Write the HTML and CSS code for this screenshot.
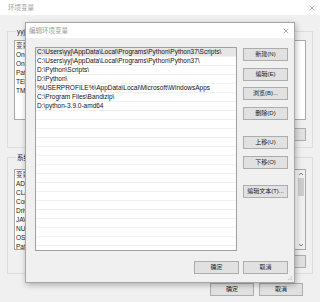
FILE: index.html
```html
<!DOCTYPE html>
<html lang="zh-CN">
<head>
    <meta charset="UTF-8">
    <title>环境变量</title>
    <link rel="stylesheet" href="styles.css">
</head>
<body>

    <!-- back window -->
    <div class="window">
        <div class="titlebar">
            <span class="title">环境变量</span>
            <svg class="close" viewBox="0 0 8 8"><path d="M1 1L7 7M7 1L1 7"/></svg>
        </div>

        <div class="content">
            <fieldset class="group group-user">
                <legend>yyj 的用户变量(U)</legend>
                <div class="listview lv-user">
                    <div class="lv-row lv-head"><span class="c1">变量</span></div>
                    <div class="lv-row"><span class="c1">OneDrive</span></div>
                    <div class="lv-row"><span class="c1">OneDriveConsumer</span></div>
                    <div class="lv-row"><span class="c1">Path</span></div>
                    <div class="lv-row"><span class="c1">TEMP</span></div>
                    <div class="lv-row"><span class="c1">TMP</span></div>
                </div>
                <div class="btnrow">
                    <button class="btn"></button>
                    <button class="btn"></button>
                    <button class="btn"></button>
                </div>
            </fieldset>

            <fieldset class="group group-sys">
                <legend>系统变量(S)</legend>
                <div class="listview lv-sys">
                    <div class="lv-rows">
                        <div class="lv-row lv-head"><span class="c1">变量</span></div>
                        <div class="lv-row"><span class="c1">ADSK_CLM</span></div>
                        <div class="lv-row"><span class="c1">CLASSPATH</span></div>
                        <div class="lv-row"><span class="c1">ComSpec</span></div>
                        <div class="lv-row"><span class="c1">DriverData</span></div>
                        <div class="lv-row"><span class="c1">JAVA_HOME</span></div>
                        <div class="lv-row"><span class="c1">NUMBER_OF_PROCESSORS</span></div>
                        <div class="lv-row"><span class="c1">OS</span></div>
                        <div class="lv-row"><span class="c1">Path</span></div>
                    </div>
                    <div class="scrollbar">
                        <svg class="arrow" viewBox="0 0 8 6"><path d="M2 4L4 2L6 4"/></svg>
                        <div class="thumb"></div>
                        <div class="track"></div>
                        <svg class="arrow" viewBox="0 0 8 6"><path d="M2 2L4 4L6 2"/></svg>
                    </div>
                </div>
                <div class="btnrow">
                    <button class="btn"></button>
                    <button class="btn"></button>
                    <button class="btn"></button>
                </div>
            </fieldset>
        </div>

        <div class="footer">
            <button class="btn">确定</button>
            <button class="btn">取消</button>
        </div>
    </div>

    <!-- front dialog -->
    <div class="dialog">
        <div class="titlebar dlg-titlebar">
            <span class="title">编辑环境变量</span>
            <svg class="close" viewBox="0 0 8 8"><path d="M1 1L7 7M7 1L1 7"/></svg>
        </div>

        <div class="dlg-body">
            <div class="pathlist">
                <div class="path selected">C:\Users\yyj\AppData\Local\Programs\Python\Python37\Scripts\</div>
                <div class="path">C:\Users\yyj\AppData\Local\Programs\Python\Python37\</div>
                <div class="path">D:\Python\Scripts\</div>
                <div class="path">D:\Python\</div>
                <div class="path">%USERPROFILE%\AppData\Local\Microsoft\WindowsApps</div>
                <div class="path">C:\Program Files\Bandizip\</div>
                <div class="path">D:\python-3.9.0-amd64</div>
            </div>

            <div class="btncol">
                <button class="btn">新建(N)</button>
                <button class="btn">编辑(E)</button>
                <button class="btn">浏览(B)...</button>
                <button class="btn">删除(D)</button>
                <button class="btn sep">上移(U)</button>
                <button class="btn">下移(O)</button>
                <button class="btn sep">编辑文本(T)...</button>
            </div>
        </div>

        <div class="dlg-footer">
            <button class="btn">确定</button>
            <button class="btn">取消</button>
        </div>

        <svg class="grip" viewBox="0 0 6 6">
            <rect x="4" y="0" width="1" height="1"/>
            <rect x="2" y="2" width="1" height="1"/>
            <rect x="4" y="2" width="1" height="1"/>
            <rect x="0" y="4" width="1" height="1"/>
            <rect x="2" y="4" width="1" height="1"/>
            <rect x="4" y="4" width="1" height="1"/>
        </svg>
    </div>

</body>
</html>
```

FILE: styles.css
```css
*{ padding: 0; margin: 0; box-sizing: border-box; }

:root{
    --bg: #f0f0f0;
    --white: #ffffff;
    --border: #adadad;
    --btn: #e1e1e1;
    --line: #dcdcdc;
    --grid: #f0f0f0;
    --gray-text: #9a9a9a;
}

body{
    width: 320px;
    height: 302px;
    overflow: hidden;
    position: relative;
    background: var(--bg);
    font-family: "Liberation Sans", "Noto Sans CJK SC", sans-serif;
    font-size: 6.5px;
    color: #1a1a1a;
}

/*   BACK WINDOW   */

.window{
    width: 320px;
    height: 302px;
}

.titlebar{
    height: 15px;
    background: var(--white);
    display: flex;
    align-items: center;
    justify-content: space-between;
    padding: 0 5px 0 8px;
}
.title{
    color: var(--gray-text);
    font-size: 6.5px;
    line-height: 9px;
}
.close{
    width: 6px;
    height: 6px;
    fill: none;
    stroke: #8c8c8c;
    stroke-width: 0.9;
}

.content{
    padding: 11.5px 8px 0 7px;
}

.group{
    border: 1px solid var(--line);
    width: 306px;
    padding: 4.5px 6px 6px 6px;
    min-width: 0;
}
.group legend{
    line-height: 9px;
    padding: 0 1px;
    margin-left: 2px;
    white-space: nowrap;
    color: #1a1a1a;
}
.group-sys{
    margin-top: 4.5px;
    padding-top: 7.5px;
    padding-bottom: 5px;
}

.listview{
    background: var(--white);
    border: 1px solid #a8a8a8;
    overflow: hidden;
}
.lv-user{ height: 80px; }
.lv-sys{
    height: 81px;
    display: flex;
}
.lv-rows{ flex: 1; }

.lv-row{
    display: flex;
    height: 9px;
    line-height: 9px;
    white-space: nowrap;
    padding-left: 1px;
}
.lv-head{ color: #333; }
.c1{ width: 90px; overflow: hidden; }

.scrollbar{
    width: 8px;
    background: var(--bg);
    display: flex;
    flex-direction: column;
    align-items: center;
}
.arrow{
    width: 8px;
    height: 6px;
    flex: none;
    fill: none;
    stroke: #606060;
    stroke-width: 0.8;
    margin: 1px 0;
}
.thumb{
    width: 6px;
    height: 18px;
    background: #cdcdcd;
}
.track{ flex: 1; }

.btnrow{
    display: flex;
    justify-content: flex-end;
    gap: 4px;
    margin-top: 8px;
}
.group-sys .btnrow{ margin-top: 5px; }

.btn{
    width: 45px;
    height: 13px;
    background: var(--btn);
    border: 1px solid var(--border);
    font-family: "Liberation Sans", "Noto Sans CJK SC", sans-serif;
    font-size: 6px;
    line-height: 11px;
    color: #1a1a1a;
}

.footer{
    display: flex;
    justify-content: flex-end;
    gap: 5px;
    padding-right: 17px;
    margin-top: 9px;
}
.footer .btn{ width: 44px; }

/*   FRONT DIALOG   */

.dialog{
    position: absolute;
    left: 25px;
    top: 22px;
    width: 270px;
    height: 261px;
    background: var(--bg);
    border: 1px solid #a6a6a6;
    box-shadow: 1px 2px 6px rgba(0, 0, 0, 0.28);
}
.dlg-titlebar{
    padding: 0 5px 0 3px;
}

.dlg-body{
    display: flex;
    gap: 6px;
    padding: 9px 0 0 9px;
}

.pathlist{
    width: 202px;
    height: 204px;
    border: 1px solid #a0a0a0;
    background: repeating-linear-gradient(to bottom, var(--white) 0 8px, var(--grid) 8px 9px);
}
.path{
    height: 9px;
    line-height: 8.5px;
    padding-left: 1px;
    white-space: nowrap;
    overflow: hidden;
    color: #111;
}
.path.selected{
    background: linear-gradient(to bottom, #e6e6e6 0 8px, var(--grid) 8px 9px);
}

.btncol{
    display: flex;
    flex-direction: column;
    gap: 6.5px;
    padding-top: 1px;
}
.btncol .sep{ margin-top: 10px; }

.dlg-footer{
    display: flex;
    justify-content: flex-end;
    gap: 4px;
    padding-right: 6px;
    margin-top: 10px;
}

.grip{
    position: absolute;
    right: 1px;
    bottom: 1px;
    width: 5px;
    height: 5px;
    fill: #b0b0b0;
}
```
